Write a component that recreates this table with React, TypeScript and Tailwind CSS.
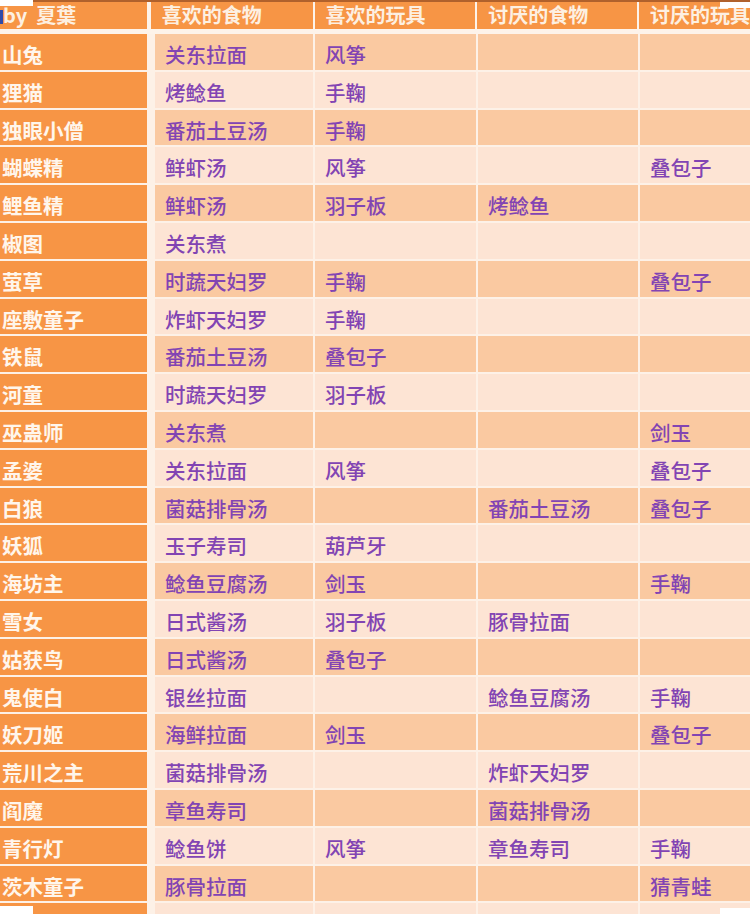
const rows: string[][] = [
  ["山兔", "关东拉面", "风筝", "", ""],
  ["狸猫", "烤鲶鱼", "手鞠", "", ""],
  ["独眼小僧", "番茄土豆汤", "手鞠", "", ""],
  ["蝴蝶精", "鲜虾汤", "风筝", "", "叠包子"],
  ["鲤鱼精", "鲜虾汤", "羽子板", "烤鲶鱼", ""],
  ["椒图", "关东煮", "", "", ""],
  ["萤草", "时蔬天妇罗", "手鞠", "", "叠包子"],
  ["座敷童子", "炸虾天妇罗", "手鞠", "", ""],
  ["铁鼠", "番茄土豆汤", "叠包子", "", ""],
  ["河童", "时蔬天妇罗", "羽子板", "", ""],
  ["巫蛊师", "关东煮", "", "", "剑玉"],
  ["孟婆", "关东拉面", "风筝", "", "叠包子"],
  ["白狼", "菌菇排骨汤", "", "番茄土豆汤", "叠包子"],
  ["妖狐", "玉子寿司", "葫芦牙", "", ""],
  ["海坊主", "鲶鱼豆腐汤", "剑玉", "", "手鞠"],
  ["雪女", "日式酱汤", "羽子板", "豚骨拉面", ""],
  ["姑获鸟", "日式酱汤", "叠包子", "", ""],
  ["鬼使白", "银丝拉面", "", "鲶鱼豆腐汤", "手鞠"],
  ["妖刀姬", "海鲜拉面", "剑玉", "", "叠包子"],
  ["荒川之主", "菌菇排骨汤", "", "炸虾天妇罗", ""],
  ["阎魔", "章鱼寿司", "", "菌菇排骨汤", ""],
  ["青行灯", "鲶鱼饼", "风筝", "章鱼寿司", "手鞠"],
  ["茨木童子", "豚骨拉面", "", "", "猜青蛙"],
  ["", "", "", "", ""],
];

const font = { fontFamily: '"Noto Sans CJK SC", "Noto Sans", sans-serif' };

export default function App() {
  return (
    <div
      className="relative w-[750px] h-[914px] overflow-hidden bg-[#fdf1e7]"
      style={font}
    >
      {/* header */}
      <div className="flex h-[34px] border-t-2 border-[#b0612c] bg-[#fdf3ea]">
        <div className="relative w-[147px] h-[27px] bg-[#f79545] text-[#fdf0e2] text-[20px] font-bold leading-[26px] pl-[3px] whitespace-nowrap">
          <span className="absolute left-0 top-[8px] w-[3px] h-[14px] bg-[#2f4aa8]" />
          by<span className="ml-[9px]">夏葉</span>
        </div>
        <div className="w-[4px]" />
        <HeaderCell w="w-[162px]" label="喜欢的食物" />
        <div className="w-[2px]" />
        <HeaderCell w="w-[161px]" label="喜欢的玩具" />
        <div className="w-[2px]" />
        <HeaderCell w="w-[160px]" label="讨厌的食物" />
        <div className="w-[2px]" />
        <HeaderCell w="flex-1" label="讨厌的玩具" />
      </div>

      {/* body */}
      <div className="flex flex-col gap-[2px]">
        {rows.map((r, i) => {
          const band = i % 2 === 0 ? "bg-[#fac9a1]" : "bg-[#fde4d4]";
          return (
            <div key={i} className="flex h-[35.8px] shrink-0">
              <div className="w-[147px] bg-[#f79545] text-[#fff6ec] text-[20.5px] font-semibold leading-[35.8px] pl-[2px] pt-[3px] whitespace-nowrap">
                {r[0]}
              </div>
              <div className="w-[8px]" />
              <BodyCell w="w-[158px]" band={band} text={r[1]} />
              <div className="w-[2px]" />
              <BodyCell w="w-[161px]" band={band} text={r[2]} />
              <div className="w-[2px]" />
              <BodyCell w="w-[160px]" band={band} text={r[3]} />
              <div className="w-[2px]" />
              <BodyCell w="flex-1" band={band} text={r[4]} />
            </div>
          );
        })}
      </div>

      {/* scan artefacts */}
      <div className="absolute left-0 top-0 w-[33px] h-[6px] bg-white" />
      <div className="absolute right-0 top-[2px] w-[30px] h-[6px] bg-white" />
      <div className="absolute left-0 bottom-0 w-[33px] h-[8px] bg-white" />
      <div className="absolute right-0 bottom-0 w-[30px] h-[6px] bg-white" />
    </div>
  );
}

function HeaderCell({ w, label }: { w: string; label: string }) {
  return (
    <div
      className={`${w} h-[27px] bg-[#f79545] text-[#fdf0e2] text-[20px] font-bold leading-[26px] pl-[11px] whitespace-nowrap`}
    >
      {label}
    </div>
  );
}

function BodyCell({ w, band, text }: { w: string; band: string; text: string }) {
  return (
    <div
      className={`${w} ${band} text-[#8244b3] text-[20.5px] font-medium leading-[35.8px] pl-[10px] pt-[3px] whitespace-nowrap overflow-hidden`}
    >
      {text}
    </div>
  );
}
